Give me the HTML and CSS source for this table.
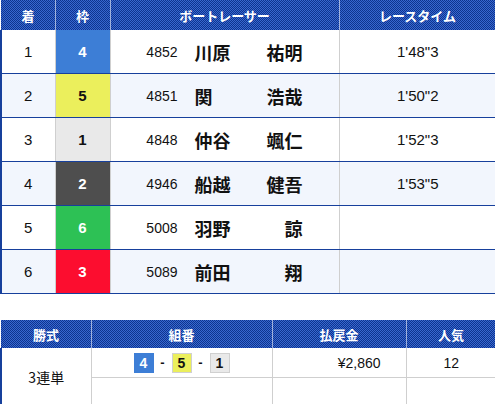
FILE: index.html
```html
<!DOCTYPE html>
<html lang="ja">
<head>
<meta charset="utf-8">
<link rel="stylesheet" href="styles.css">
</head>
<body>
<table class="result">
  <colgroup><col class="c1"><col class="c2"><col class="c3"><col class="c4"></colgroup>
  <thead>
    <tr><th>着</th><th class="sep">枠</th><th class="sep">ボートレーサー</th><th class="sep">レースタイム</th></tr>
  </thead>
  <tbody>
    <tr><td>1</td><td class="waku w4">4</td><td class="racer"><span class="no">4852</span><span class="name"><span>川原</span><span>祐明</span></span></td><td class="time">1'48"3</td></tr>
    <tr class="alt"><td>2</td><td class="waku w5">5</td><td class="racer"><span class="no">4851</span><span class="name"><span>関</span><span>浩哉</span></span></td><td class="time">1'50"2</td></tr>
    <tr><td>3</td><td class="waku w1">1</td><td class="racer"><span class="no">4848</span><span class="name"><span>仲谷</span><span>颯仁</span></span></td><td class="time">1'52"3</td></tr>
    <tr class="alt"><td>4</td><td class="waku w2">2</td><td class="racer"><span class="no">4946</span><span class="name"><span>船越</span><span>健吾</span></span></td><td class="time">1'53"5</td></tr>
    <tr><td>5</td><td class="waku w6">6</td><td class="racer"><span class="no">5008</span><span class="name"><span>羽野</span><span>諒</span></span></td><td class="time"></td></tr>
    <tr class="alt"><td>6</td><td class="waku w3">3</td><td class="racer"><span class="no">5089</span><span class="name"><span>前田</span><span>翔</span></span></td><td class="time"></td></tr>
  </tbody>
</table>

<table class="payout">
  <colgroup><col class="p1"><col class="p2"><col class="p3"><col class="p4"></colgroup>
  <thead>
    <tr><th>勝式</th><th class="sep">組番</th><th class="sep">払戻金</th><th class="sep">人気</th></tr>
  </thead>
  <tbody>
    <tr>
      <td rowspan="2" class="kind">3連単</td>
      <td class="combo g"><span class="combo-in"><span class="badge w4">4</span><span class="dash">-</span><span class="badge w5">5</span><span class="dash">-</span><span class="badge w1">1</span></span></td>
      <td class="yen g">¥2,860</td>
      <td class="pop g">12</td>
    </tr>
    <tr class="r2"><td class="g"></td><td class="g"></td><td class="g"></td></tr>
  </tbody>
</table>
</body>
</html>
```

FILE: styles.css
```css
html, body {
  margin: 0;
  padding: 0;
  background: #fff;
  overflow: hidden;
}
body {
  font-family: "Liberation Sans", "Noto Sans CJK JP", sans-serif;
  color: #111;
  width: 495px;
}
table {
  border-collapse: collapse;
  table-layout: fixed;
  width: 495px;
}
.c1 { width: 54px; }
.c2 { width: 55px; }
.c3 { width: 229px; }
.c4 { width: 157px; }

th {
  background: repeating-conic-gradient(#0d348f 0 25%, #3867cf 0 50%) 0 0 / 2px 2px;
  color: #fff;
  font-family: "Noto Sans CJK JP", sans-serif;
  font-weight: 700;
  font-size: 13px;
  height: 30px;
  padding: 0;
  text-align: center;
  vertical-align: middle;
}
th.sep {
  box-shadow: inset 1px 0 0 rgba(200, 210, 235, 0.75);
}

.result td {
  height: 43px;
  padding: 0;
  border-bottom: 1px solid #17409c;
  text-align: center;
  vertical-align: middle;
  font-size: 15px;
}
.result td:first-child {
  border-left: 2px solid #17409c;
}
.result td + td {
  border-left: 1px solid #cfcfcf;
}
.result tr.alt td {
  background: #f2f6fd;
}
.result td.waku {
  font-weight: 700;
  font-size: 15px;
}

.w1 { background: #e9e9e9 !important; color: #111; }
.w2 { background: #4e4e4e !important; color: #fff; }
.w3 { background: #fc0d2f !important; color: #fff; }
.w4 { background: #3d7ed6 !important; color: #fff; }
.w5 { background: #ebef5c !important; color: #111; }
.w6 { background: #2dc155 !important; color: #fff; }

.result td.racer {
  text-align: left;
  padding-left: 35px;
  white-space: nowrap;
}
.no {
  display: inline-block;
  width: 32px;
  font-size: 14px;
  text-align: right;
  margin-right: 17px;
  vertical-align: middle;
}
.name {
  display: inline-flex;
  justify-content: space-between;
  width: 108px;
  font-family: "Noto Sans CJK JP", sans-serif;
  font-weight: 700;
  font-size: 18px;
  vertical-align: middle;
}
.time {
  font-size: 14px;
}

.payout {
  margin-top: 26px;
}
.p1 { width: 90px; }
.p2 { width: 181px; }
.p3 { width: 134px; }
.p4 { width: 90px; }
.payout th {
  height: 28px;
}
.payout td {
  padding: 0;
  font-size: 14px;
  vertical-align: middle;
  text-align: center;
}
.payout td.kind {
  border-left: 2px solid #17409c;
  font-family: "Noto Sans CJK JP", sans-serif;
  font-size: 14px;
  padding-top: 2px;
}
.payout td.g {
  border-left: 1px solid #cfcfcf;
}
.payout tr:first-child td.g {
  height: 29px;
  border-bottom: 1px solid #cfcfcf;
}
.payout tr.r2 td {
  height: 26px;
}
.combo-in {
  display: inline-flex;
  align-items: center;
}
.badge {
  width: 20px;
  height: 20px;
  box-sizing: border-box;
  display: inline-flex;
  align-items: center;
  justify-content: center;
  font-weight: 700;
  font-size: 14px;
  border: 1px solid #d0d0d0;
}
.badge.w4 { border-color: #3d7ed6; }
.dash {
  width: 18px;
  text-align: center;
  font-weight: 700;
  font-size: 13px;
}
td.yen {
  text-align: right;
  padding-right: 25px;
}
td.pop {
  text-align: center;
}
```
